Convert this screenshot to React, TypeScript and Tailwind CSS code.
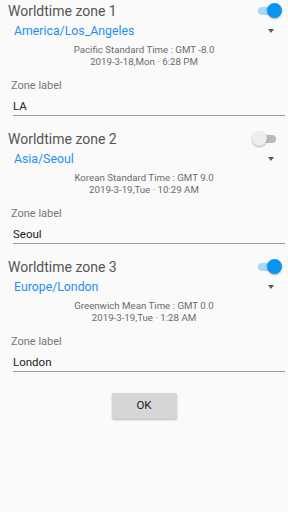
import React from "react";

type Zone = {
  title: string;
  tz: string;
  info: string;
  date: string;
  label: string;
  on: boolean;
};

const zones: Zone[] = [
  {
    title: "Worldtime zone 1",
    tz: "America/Los_Angeles",
    info: "Pacific Standard Time : GMT -8.0",
    date: "2019-3-18,Mon · 6:28 PM",
    label: "LA",
    on: true,
  },
  {
    title: "Worldtime zone 2",
    tz: "Asia/Seoul",
    info: "Korean Standard Time : GMT 9.0",
    date: "2019-3-19,Tue · 10:29 AM",
    label: "Seoul",
    on: false,
  },
  {
    title: "Worldtime zone 3",
    tz: "Europe/London",
    info: "Greenwich Mean Time : GMT 0.0",
    date: "2019-3-19,Tue · 1:28 AM",
    label: "London",
    on: true,
  },
];

function Switch({ on }: { on: boolean }) {
  return (
    <div className="relative w-[30px] h-[16px]">
      <div
        className={
          on
            ? "absolute left-[6px] top-[4px] w-[18px] h-[8px] rounded-full bg-[#a9d7fb]"
            : "absolute left-[6px] top-[4px] w-[18px] h-[8px] rounded-full bg-[#b9b9b9]"
        }
      />
      <div
        className={
          on
            ? "absolute right-0 top-[0px] w-[15px] h-[15px] rounded-full bg-[#0a94f2] shadow-[0_1px_2px_rgba(0,0,0,0.3)]"
            : "absolute left-0 top-[0px] w-[15px] h-[15px] rounded-full bg-[#ededed] shadow-[0_1px_2px_rgba(0,0,0,0.3)]"
        }
      />
    </div>
  );
}

function ZoneBlock({ z }: { z: Zone }) {
  return (
    <div className="flex flex-col h-[128px]">
      <div className="h-[22px] flex items-center justify-between pl-[8px] pr-[6px]">
        <span className="text-[14px] text-[#555555] leading-none">{z.title}</span>
        <Switch on={z.on} />
      </div>
      <div className="h-[18px] flex items-center justify-between pl-[14px] pr-[14px]">
        <span className="text-[12.3px] text-[#1c8ff2] leading-none">{z.tz}</span>
        <div className="w-0 h-0 border-l-[3.5px] border-r-[3.5px] border-t-[4px] border-l-transparent border-r-transparent border-t-[#5a5a5a]" />
      </div>
      <div className="mt-[4px] h-[12px] flex items-center justify-center text-[9.7px] text-[#6b6b6b] leading-none">
        {z.info}
      </div>
      <div className="h-[12px] flex items-center justify-center text-[9.7px] text-[#6b6b6b] leading-none">
        {z.date}
      </div>
      <div className="mt-[10px] h-[14px] flex items-center pl-[11px] text-[11px] text-[#777777] leading-none">
        Zone label
      </div>
      <div className="mt-[7px] ml-[13px] mr-[3px] h-[17px] flex items-center border-b border-[#9a9a9a] text-[11.5px] text-[#222222] leading-none pb-[1px]">
        {z.label}
      </div>
    </div>
  );
}

export default function App() {
  return (
    <div
      className="w-[288px] h-[512px] bg-[#fafafa] flex flex-col"
      style={{ fontFamily: "Roboto, 'Noto Sans', sans-serif" }}
    >
      {zones.map((z) => (
        <ZoneBlock key={z.title} z={z} />
      ))}
      <div className="flex justify-center mt-[9px]">
        <button className="w-[65px] h-[26px] bg-[#d6d6d6] rounded-[2px] shadow-[0_1px_2px_rgba(0,0,0,0.25)] text-[11.5px] text-[#222222] flex items-center justify-center">
          OK
        </button>
      </div>
    </div>
  );
}
